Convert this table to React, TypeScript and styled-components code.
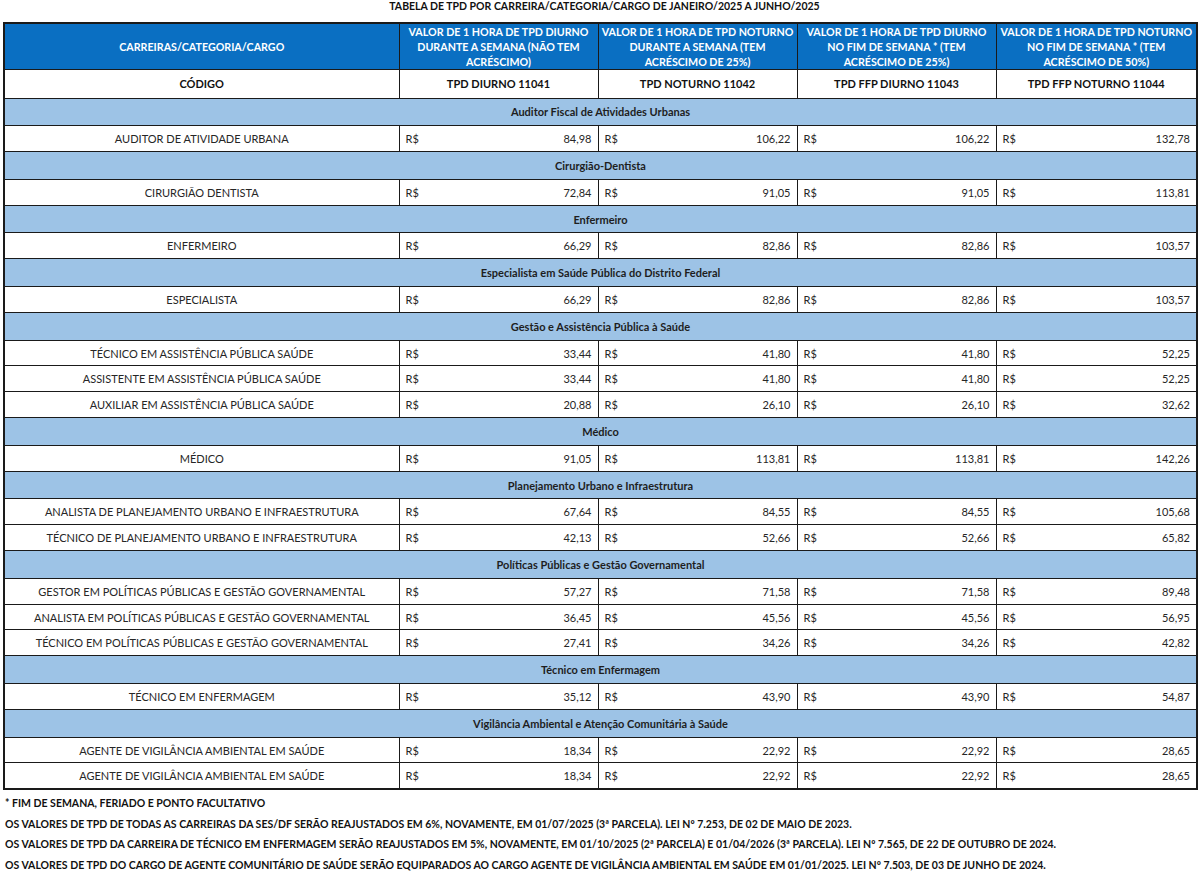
import React from 'react';
import styled, { createGlobalStyle } from 'styled-components';

const GlobalStyle = createGlobalStyle`
  html, body {
    margin: 0;
    padding: 0;
    background: #ffffff;
  }
  body {
    font-family: Lato, "Liberation Sans", sans-serif;
    color: #222;
  }
`;

type Row = { cargo: string; v: [string, string, string, string] };
type Section = { title: string; rows: Row[] };

const sections: Section[] = [
  { title: 'Auditor Fiscal de Atividades Urbanas', rows: [{ cargo: 'AUDITOR DE ATIVIDADE URBANA', v: ['84,98', '106,22', '106,22', '132,78'] }] },
  { title: 'Cirurgião-Dentista', rows: [{ cargo: 'CIRURGIÃO DENTISTA', v: ['72,84', '91,05', '91,05', '113,81'] }] },
  { title: 'Enfermeiro', rows: [{ cargo: 'ENFERMEIRO', v: ['66,29', '82,86', '82,86', '103,57'] }] },
  { title: 'Especialista em Saúde Pública do Distrito Federal', rows: [{ cargo: 'ESPECIALISTA', v: ['66,29', '82,86', '82,86', '103,57'] }] },
  {
    title: 'Gestão e Assistência Pública à Saúde',
    rows: [
      { cargo: 'TÉCNICO EM ASSISTÊNCIA PÚBLICA SAÚDE', v: ['33,44', '41,80', '41,80', '52,25'] },
      { cargo: 'ASSISTENTE EM ASSISTÊNCIA PÚBLICA SAÚDE', v: ['33,44', '41,80', '41,80', '52,25'] },
      { cargo: 'AUXILIAR EM ASSISTÊNCIA PÚBLICA SAÚDE', v: ['20,88', '26,10', '26,10', '32,62'] },
    ],
  },
  { title: 'Médico', rows: [{ cargo: 'MÉDICO', v: ['91,05', '113,81', '113,81', '142,26'] }] },
  {
    title: 'Planejamento Urbano e Infraestrutura',
    rows: [
      { cargo: 'ANALISTA DE PLANEJAMENTO URBANO E INFRAESTRUTURA', v: ['67,64', '84,55', '84,55', '105,68'] },
      { cargo: 'TÉCNICO DE PLANEJAMENTO URBANO E INFRAESTRUTURA', v: ['42,13', '52,66', '52,66', '65,82'] },
    ],
  },
  {
    title: 'Políticas Públicas e Gestão Governamental',
    rows: [
      { cargo: 'GESTOR EM POLÍTICAS PÚBLICAS E GESTÃO GOVERNAMENTAL', v: ['57,27', '71,58', '71,58', '89,48'] },
      { cargo: 'ANALISTA EM POLÍTICAS PÚBLICAS E GESTÃO GOVERNAMENTAL', v: ['36,45', '45,56', '45,56', '56,95'] },
      { cargo: 'TÉCNICO EM POLÍTICAS PÚBLICAS E GESTÃO GOVERNAMENTAL', v: ['27,41', '34,26', '34,26', '42,82'] },
    ],
  },
  { title: 'Técnico em Enfermagem', rows: [{ cargo: 'TÉCNICO EM ENFERMAGEM', v: ['35,12', '43,90', '43,90', '54,87'] }] },
  {
    title: 'Vigilância Ambiental e Atenção Comunitária à Saúde',
    rows: [
      { cargo: 'AGENTE DE VIGILÂNCIA AMBIENTAL EM SAÚDE', v: ['18,34', '22,92', '22,92', '28,65'] },
      { cargo: 'AGENTE DE VIGILÂNCIA AMBIENTAL EM SAÚDE', v: ['18,34', '22,92', '22,92', '28,65'] },
    ],
  },
];

const headers = [
  'VALOR DE 1 HORA DE TPD DIURNO DURANTE A SEMANA (NÃO TEM ACRÉSCIMO)',
  'VALOR DE 1 HORA DE TPD NOTURNO DURANTE A SEMANA (TEM ACRÉSCIMO DE 25%)',
  'VALOR DE 1 HORA DE TPD DIURNO NO FIM DE SEMANA * (TEM ACRÉSCIMO DE 25%)',
  'VALOR DE 1 HORA DE TPD NOTURNO NO FIM DE SEMANA * (TEM ACRÉSCIMO DE 50%)',
];

const codes = ['TPD DIURNO 11041', 'TPD NOTURNO 11042', 'TPD FFP DIURNO 11043', 'TPD FFP NOTURNO 11044'];

const notes = [
  '* FIM DE SEMANA, FERIADO E PONTO FACULTATIVO',
  'OS VALORES DE TPD DE TODAS AS CARREIRAS DA SES/DF SERÃO REAJUSTADOS EM 6%, NOVAMENTE, EM 01/07/2025 (3ª PARCELA). LEI Nº 7.253, DE 02 DE MAIO DE 2023.',
  'OS VALORES DE TPD DA CARREIRA DE TÉCNICO EM ENFERMAGEM SERÃO REAJUSTADOS EM 5%, NOVAMENTE, EM 01/10/2025 (2ª PARCELA) E 01/04/2026 (3ª PARCELA). LEI Nº 7.565, DE 22 DE OUTUBRO DE 2024.',
  'OS VALORES DE TPD DO CARGO DE AGENTE COMUNITÁRIO DE SAÚDE SERÃO EQUIPARADOS AO CARGO AGENTE DE VIGILÂNCIA AMBIENTAL EM SAÚDE EM 01/01/2025. LEI Nº 7.503, DE 03 DE JUNHO DE 2024.',
];

const Page = styled.div`
  width: 1200px;
  height: 873px;
  padding: 0 4px 0 3px;
  box-sizing: border-box;
  overflow: hidden;
`;

const Title = styled.div`
  height: 22px;
  line-height: 12px;
  text-align: center;
  font-size: 10.5px;
  font-weight: 700;
  color: #111;
  padding-left: 10px;
`;

const Table = styled.table`
  width: 1193px;
  border-collapse: collapse;
  table-layout: fixed;
  border: 2px solid #1a1a1a;
`;

const Cell = styled.td<{ $align?: 'left' | 'center' | 'right' }>`
  border: 1.5px solid #1a1a1a;
  height: 24.8px;
  padding: 0 6px;
  font-size: 11px;
  color: #262626;
  text-align: ${({ $align }) => $align || 'center'};
  white-space: nowrap;
`;

const HeadCell = styled.th`
  background: #0a6fc2;
  color: #ffffff;
  border: 1.5px solid #1a1a1a;
  height: 45px;
  padding: 0 1px;
  font-size: 10.7px;
  font-weight: 700;
  line-height: 15px;
  text-align: center;
`;

const CodeCell = styled.td`
  border: 1.5px solid #1a1a1a;
  height: 25.5px;
  font-size: 11px;
  font-weight: 700;
  color: #111;
  text-align: center;
`;

const SectionCell = styled.td`
  background: #9dc3e6;
  border: 1.5px solid #1a1a1a;
  height: 24.8px;
  font-size: 11px;
  font-weight: 700;
  color: #1e1e1e;
  text-align: center;
`;

const Money = styled.div`
  display: flex;
  justify-content: space-between;
  align-items: center;
`;

const Notes = styled.div`
  padding: 7px 0 0 2px;
  display: flex;
  flex-direction: column;
`;

const Note = styled.div`
  font-size: 10.5px;
  font-weight: 700;
  color: #111;
  height: 20.5px;
  line-height: 13px;
`;

export default function App() {
  return (
    <Page>
      <GlobalStyle />
      <Title>TABELA DE TPD POR CARREIRA/CATEGORIA/CARGO DE JANEIRO/2025 A JUNHO/2025</Title>
      <Table>
        <colgroup>
          <col style={{ width: 395 }} />
          <col style={{ width: 199 }} />
          <col style={{ width: 199 }} />
          <col style={{ width: 199 }} />
          <col style={{ width: 201 }} />
        </colgroup>
        <thead>
          <tr>
            <HeadCell>CARREIRAS/CATEGORIA/CARGO</HeadCell>
            {headers.map((h) => (
              <HeadCell key={h}>{h}</HeadCell>
            ))}
          </tr>
        </thead>
        <tbody>
          <tr>
            <CodeCell>CÓDIGO</CodeCell>
            {codes.map((c) => (
              <CodeCell key={c}>{c}</CodeCell>
            ))}
          </tr>
          {sections.map((s) => (
            <React.Fragment key={s.title}>
              <tr>
                <SectionCell colSpan={5}>{s.title}</SectionCell>
              </tr>
              {s.rows.map((r, i) => (
                <tr key={s.title + i}>
                  <Cell>{r.cargo}</Cell>
                  {r.v.map((val, j) => (
                    <Cell key={j} $align="left">
                      <Money>
                        <span>R$</span>
                        <span>{val}</span>
                      </Money>
                    </Cell>
                  ))}
                </tr>
              ))}
            </React.Fragment>
          ))}
        </tbody>
      </Table>
      <Notes>
        {notes.map((n) => (
          <Note key={n}>{n}</Note>
        ))}
      </Notes>
    </Page>
  );
}
